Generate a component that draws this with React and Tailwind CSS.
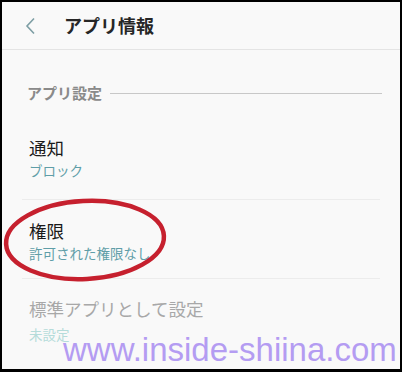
const jp = { fontFamily: '"Noto Sans CJK JP", "Noto Sans", sans-serif' };

const Row = ({ title, sub, dim, children }) => (
    <div className="relative pl-[27px] pr-[20px]">
        <div className={`text-[17.5px] leading-[24px] ${dim ? 'text-[#a8a8a8]' : 'text-[#1a1a1a]'}`}>{title}</div>
        <div className={`text-[13.5px] leading-[20px] ${dim ? 'text-[#b5dcda] mt-[3px]' : 'text-[#5f9ea8]'}`}>{sub}</div>
        {children}
    </div>
);

const App = () => {
    return (
        <div className="w-[402px] h-[372px] border-2 border-b-[3px] border-black bg-[#f9f9f9] overflow-hidden relative" style={jp}>
            {/* Header */}
            <div className="h-[48px] flex items-center border-b border-[#e4e4e4]">
                <svg width="12" height="18" viewBox="0 0 12 18" className="ml-[23px]">
                    <path d="M9 1.5 L2 9 L9 16.5" fill="none" stroke="#7d9ea4" strokeWidth="1.6" />
                </svg>
                <span className="ml-[27px] text-[18px] font-bold text-[#262626]">アプリ情報</span>
            </div>

            {/* Section label */}
            <div className="flex items-center pl-[25px] pr-[18px] mt-[33px] h-[20px]">
                <span className="text-[15px] font-bold text-[#8a8a8a]">アプリ設定</span>
                <div className="flex-1 h-px bg-[#c8c8c8] ml-[8px]"></div>
            </div>

            <div className="mt-[33px]">
                <Row title="通知" sub="ブロック" />
            </div>
            <div className="mx-[20px] mt-[19px] h-px bg-[#ececec]"></div>

            <div className="mt-[19px]">
                <Row title="権限" sub="許可された権限なし">
                    {/* red ellipse */}
                    <svg width="170" height="86" viewBox="0 0 170 86" className="absolute left-[-2px] top-[-22px]">
                        <ellipse cx="85" cy="43" rx="79" ry="39" fill="none" stroke="#c6202e" strokeWidth="4.5" transform="rotate(-3 85 43)" />
                    </svg>
                </Row>
            </div>
            <div className="mx-[20px] mt-[15px] h-px bg-[#ececec]"></div>

            <div className="mt-[18px]">
                <Row title="標準アプリとして設定" sub="未設定" dim />
            </div>

            {/* Watermark */}
            <div
                className="absolute left-[61px] top-[328px] text-[33px] leading-[40px] text-[#b49cf2] whitespace-nowrap"
                style={{ fontFamily: '"Liberation Sans", Arial, sans-serif' }}
            >
                www.inside-shiina.com
            </div>
        </div>
    );
};

export default App;
